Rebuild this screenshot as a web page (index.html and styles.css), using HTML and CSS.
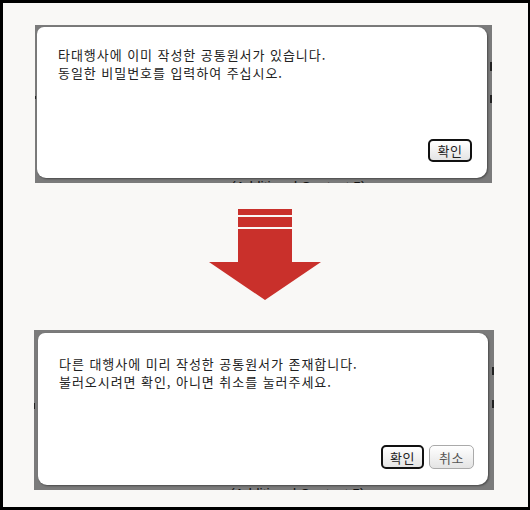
FILE: index.html
```html
<!DOCTYPE html>
<html lang="ko">
<head>
<meta charset="utf-8">
<title>공통원서 안내</title>
<link rel="stylesheet" href="styles.css">
</head>
<body>
<div class="frame">
  <section class="shot shot-top">
    <div class="backdrop">
      <span class="bg-text">(Additional Contact.5)</span>
      <span class="bg-mark m1"></span>
      <span class="bg-mark m2"></span>
      <span class="bg-mark m3"></span>
    </div>
    <div class="dialog">
      <p class="msg">타대행사에 이미 작성한 공통원서가 있습니다.<br>동일한 비밀번호를 입력하여 주십시오.</p>
      <div class="actions">
        <button class="btn btn-primary">확인</button>
      </div>
    </div>
  </section>

  <div class="arrow-row">
    <svg class="arrow" width="112" height="91" viewBox="0 0 112 91">
      <rect x="29" y="0" width="54" height="6" fill="#c9302b"/>
      <rect x="29" y="8" width="54" height="10" fill="#c9302b"/>
      <polygon points="29,20 83,20 83,53 112,53 56,91 0,53 29,53" fill="#c9302b"/>
    </svg>
  </div>

  <section class="shot shot-bottom">
    <div class="backdrop">
      <span class="bg-text">(Additional Contact.5)</span>
      <span class="bg-mark m4"></span>
      <span class="bg-mark m5"></span>
      <span class="bg-mark m6"></span>
    </div>
    <div class="dialog">
      <p class="msg">다른 대행사에 미리 작성한 공통원서가 존재합니다.<br>불러오시려면 확인, 아니면 취소를 눌러주세요.</p>
      <div class="actions">
        <button class="btn btn-primary">확인</button>
        <button class="btn btn-secondary">취소</button>
      </div>
    </div>
  </section>
</div>
</body>
</html>
```

FILE: styles.css
```css
* {
  box-sizing: border-box;
}

html, body {
  margin: 0;
  padding: 0;
}

body {
  width: 530px;
  height: 510px;
  font-family: "Noto Sans CJK KR", "Noto Sans", sans-serif;
}

.frame {
  width: 530px;
  height: 510px;
  background: #f9f8f6;
  border-style: solid;
  border-color: #000;
  border-width: 3px 2px 3px 3px;
  display: flex;
  flex-direction: column;
}

/* captured modal over a greyed-out page */
.shot {
  position: relative;
  background: #7b7b7b;
  overflow: hidden;
}

.shot-top {
  margin: 22px 0 0 32px;
  width: 457px;
  height: 158px;
}

.shot-bottom {
  margin: 30px 0 0 31px;
  width: 460px;
  height: 160px;
}

.backdrop {
  position: absolute;
  inset: 0;
}

/* page text peeking out under the modal */
.bg-text {
  position: absolute;
  left: 196px;
  bottom: -12px;
  font-family: "Liberation Sans", sans-serif;
  font-size: 14px;
  line-height: 16px;
  color: #111;
}

.bg-mark {
  position: absolute;
  width: 2px;
  height: 8px;
  background: #222;
}

.m1 { right: 0; top: 37px; height: 9px; }
.m2 { right: 0; top: 70px; }
.m3 { left: 0; top: 71px; width: 1px; height: 3px; }
.m4 { right: 0; top: 37px; }
.m5 { right: 0; top: 70px; }
.m6 { left: 0; top: 73px; width: 1px; height: 6px; }

.dialog {
  position: absolute;
  background: #fff;
  border-radius: 7px 9px 10px 9px;
  box-shadow: 1px 1px 2px rgba(40, 40, 40, 0.6);
  display: flex;
  flex-direction: column;
}

.shot-top .dialog {
  top: 2px;
  left: 2px;
  right: 5px;
  bottom: 5px;
  padding: 19px 15px 16px 21px;
}

.shot-bottom .dialog {
  top: 3px;
  left: 4px;
  right: 6px;
  bottom: 5px;
  padding: 22px 14px 16px 21px;
}

.msg {
  margin: 0;
  font-size: 13px;
  line-height: 18px;
  letter-spacing: 0.95px;
  color: #222;
}

.actions {
  margin-top: auto;
  display: flex;
  justify-content: flex-end;
  gap: 5px;
}

.btn {
  font-family: "Noto Sans CJK KR", sans-serif;
  font-size: 13px;
  line-height: 1;
  padding: 0;
  height: 24px;
  border-radius: 5px;
  background: linear-gradient(#ffffff, #e4e4e4);
  color: #222;
  letter-spacing: 0.5px;
}

.btn-primary {
  width: 43px;
  border: 2px solid #111;
}

.shot-top .btn-primary {
  width: 44px;
  height: 23px;
}

.btn-secondary {
  width: 45px;
  border: 1px solid #aaa;
  color: #555;
}

.arrow-row {
  display: flex;
  padding-left: 206px;
  margin-top: 26px;
}

.arrow {
  display: block;
}
```
